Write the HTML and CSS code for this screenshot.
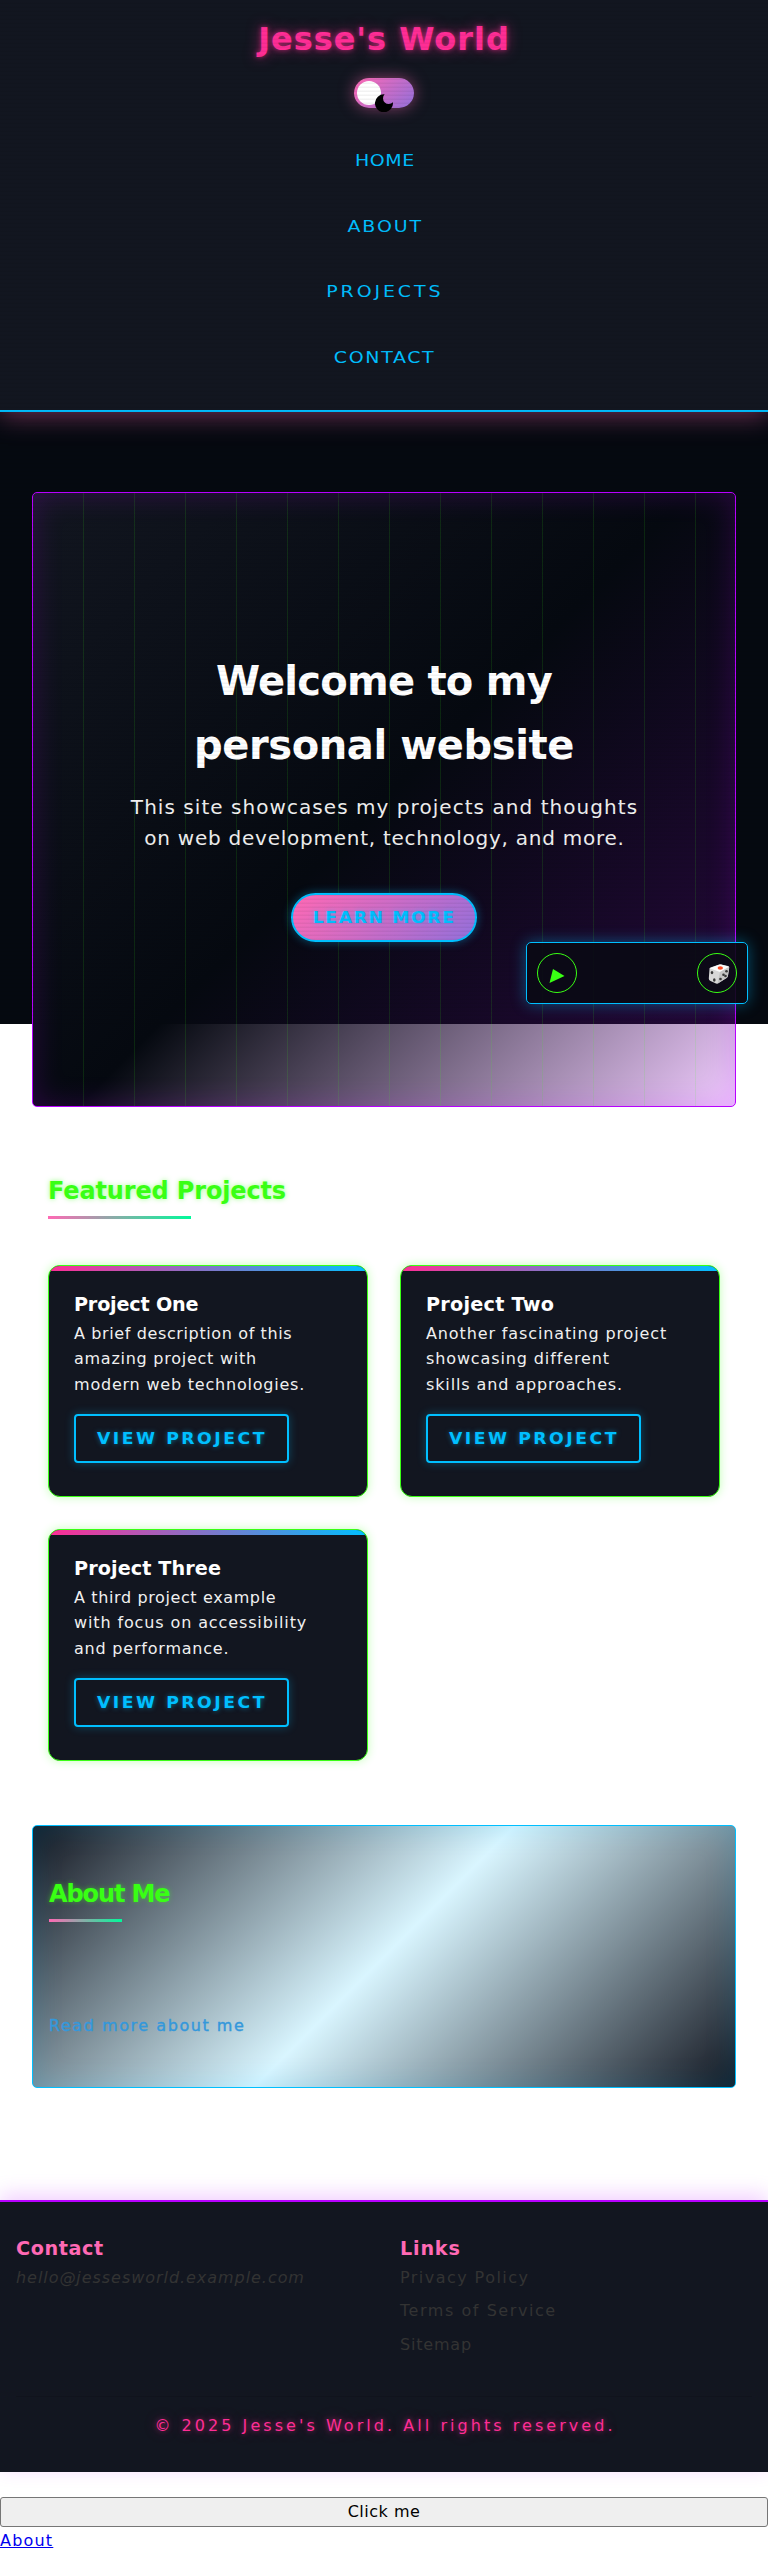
FILE: index.html
```html
<!DOCTYPE html>
<html lang="en">
<head>
<meta charset="utf-8">
<title>Jesse's World</title>
<link rel="stylesheet" href="styles.css">
</head>
<body>
<div class="backdrop"></div>
<div class="scanlines"></div>
<header class="header">
  <div class="logo">Jesse's World</div>
  <div class="toggle"><span class="knob"></span>
    <svg class="moon" viewBox="0 0 18 18"><path d="M9.6 0.3A9 9 0 1 0 17.9 8.2A5.6 5.6 0 1 1 9.6 0.3Z"/></svg>
  </div>
  <nav class="nav">
    <a class="home">HOME</a>
    <a class="about-nav">ABOUT</a>
    <a class="projects">PROJECTS</a>
    <a class="contact">CONTACT</a>
  </nav>
</header>
<main>
  <section class="hero">
    <h1><span class="h1-a">Welcome to my</span><span class="h1-b">personal website</span></h1>
    <p class="lead"><span class="lead-a">This site showcases my projects and thoughts</span><span class="lead-b">on web development, technology, and more.</span></p>
    <a class="learn"><span class="wide">LEARN MORE</span></a>
  </section>
  <section class="featured">
    <h2 class="title">Featured Projects</h2>
    <div class="cards">
      <article class="card">
        <h3 class="one">Project One</h3>
        <p><span class="ls6">A brief description of this</span><span class="ls7">amazing project with</span><span class="ls8">modern web technologies.</span></p>
        <a class="view"><span class="wide">VIEW PROJECT</span></a>
      </article>
      <article class="card">
        <h3 class="two">Project Two</h3>
        <p><span class="ls9">Another fascinating project</span><span class="ls9">showcasing different</span><span class="ls9">skills and approaches.</span></p>
        <a class="view"><span class="wide">VIEW PROJECT</span></a>
      </article>
      <article class="card">
        <h3 class="three">Project Three</h3>
        <p><span class="ls6">A third project example</span><span class="ls9">with focus on accessibility</span><span class="ls8">and performance.</span></p>
        <a class="view"><span class="wide">VIEW PROJECT</span></a>
      </article>
    </div>
  </section>
  <section class="about">
    <h2 class="title">About Me</h2>
    <a class="more">Read more about me</a>
  </section>
</main>
<footer class="footer">
  <div class="cols">
    <div><h3 class="fc">Contact</h3><address>hello@jessesworld.example.com</address></div>
    <div><h3 class="fl">Links</h3>
      <ul><li class="privacy">Privacy Policy</li><li class="terms">Terms of Service</li><li class="sitemap">Sitemap</li></ul>
    </div>
  </div>
  <p class="copy">© 2025 Jesse's World. All rights reserved.</p>
</footer>
<button class="click">Click me</button>
<a class="last" href="#">About</a>
<div class="player">
  <span class="round"><svg class="play" viewBox="0 0 16 14"><path d="M4 0L15.5 7L0.5 14Z"/></svg></span>
  <span class="round"><svg class="die" viewBox="0 0 22 20">
    <path d="M1.5 5Q1 4 2.5 3.5L10.500 .7Q12 .2 13 .5L20 2Q21.500 2.500 21.200 4L20 11.500Q19.800 13 18.500 14L10.500 19Q9.500 20 8 19.500L2 16.800Q.8 16 .8 14.500Z" fill="#d8d8d8"/>
    <path d="M1.700 4.200L11.500 .6Q12.300 .3 13 .5L21 2.700L12 8Z" fill="#fbfbfb"/>
    <path d="M12 8L21.200 3L20 11.500Q19.800 13 18.500 14L9.500 19.700Z" fill="#c4c4c4"/>
    <ellipse cx="12.300" cy="4" rx="2.700" ry="1.800" fill="#ff4b25"/>
    <g fill="#383838"><ellipse cx="4" cy="8.600" rx="1.300" ry="1.700"/><ellipse cx="6.300" cy="16" rx="1.300" ry="1.700"/><circle cx="18.500" cy="7.200" r="1.300"/><circle cx="15.500" cy="10.800" r="1.300"/><circle cx="12.500" cy="15" r="1.300"/><circle cx="17.500" cy="12" r="1.300"/></g>
  </svg></span>
</div>
</body>
</html>
```
FILE: styles.css
```css
* { box-sizing: border-box; margin: 0; padding: 0; }
body {
  position: relative;
  height: 2553px;
  background: #fff;
  color: #fff;
  font: 16px/25.6px "DejaVu Sans", sans-serif;
  white-space: nowrap;
  overflow: hidden;
}
.backdrop {
  position: absolute; top: 0; left: 0; right: 0; height: 1024px; z-index: -1;
  background: #050910;
}
.scanlines {
  position: absolute; top: 0; left: 0; right: 0; height: 1024px; z-index: 5;
  pointer-events: none;
  background: repeating-linear-gradient(0deg, rgba(0, 0, 0, .05) 0, rgba(0, 0, 0, .05) 1px, transparent 2px, transparent 4px);
}
.wide { display: inline-block; transform: scaleX(1.15); }

.header {
  height: 412px; padding-top: 15px;
  display: flex; flex-direction: column; align-items: center;
  background: #121620;
  border-bottom: 2px solid #00bfff;
  box-shadow: 0 5px 24px rgba(255, 105, 180, .38);
}
.logo {
  height: 48px;
  font-weight: bold; font-size: 32px; line-height: 48px; letter-spacing: .95px;
  color: #ff2d95;
  text-shadow: 0 0 5px rgba(255, 45, 149, .6), 0 0 14px rgba(255, 45, 149, .5);
}
.toggle {
  position: relative;
  width: 60px; height: 30px; margin-top: 15px; padding: 3px;
  border-radius: 15px;
  background: linear-gradient(135deg, #ff69b4, #9370db);
  box-shadow: 0 0 15px rgba(255, 105, 180, .5);
}
.knob { display: block; width: 24px; height: 24px; border-radius: 50%; background: #fff; }
.moon { position: absolute; left: 21px; top: 16px; width: 18px; height: 18px; }
.nav {
  margin-top: 21px; padding-left: 2px;
  display: grid; grid-auto-rows: 65.6px; justify-items: center;
}
.nav a { line-height: 65.6px; font-size: 15.2px; color: #00bfff; transform: scaleX(1.25); }
.home { letter-spacing: .4px; }
.about-nav { letter-spacing: 1.5px; }
.projects { letter-spacing: 2.3px; }
.contact { letter-spacing: 1.3px; }

.hero {
  height: 615px; margin: 80px 32px 0; padding-top: 156px;
  display: flex; flex-direction: column; align-items: center;
  border: 1px solid #b800ff; border-radius: 5px;
  background:
    repeating-linear-gradient(90deg, transparent 0, transparent 50px, rgba(57, 255, 20, .12) 50px, rgba(57, 255, 20, .12) 51px),
    linear-gradient(135deg, #121620 0%, #050910 50%, rgba(184, 0, 255, .2) 100%);
  box-shadow: inset 0 0 30px rgba(184, 0, 255, .2);
}
h1 { font-size: 40px; line-height: 64px; text-align: center; }
h1 span, .lead span, .card p span { display: block; }
.h1-a { letter-spacing: -.75px; }
.h1-b { letter-spacing: -.4px; }
.lead { margin-top: 14.500px; padding-left: 1px; font-size: 20px; line-height: 31px; text-align: center; color: #f0f0f0; }
.lead-a { letter-spacing: 1.05px; }
.lead-b { letter-spacing: .75px; }
.learn {
  width: 186px; height: 49px; margin-top: 39.500px;
  border: 2px solid #00bfff; border-radius: 25px;
  background: linear-gradient(135deg, #ff69b4, #9370db);
  box-shadow: 0 0 10px rgba(0, 191, 255, .4);
  color: #00bfff; font-weight: bold; font-size: 15px; line-height: 47px; text-align: center;
  letter-spacing: 1.4px;
  text-shadow: 0 0 5px rgba(0, 191, 255, .4);
}

.featured { padding: 65px 48px 0; }
.title {
  position: relative; width: max-content;
  font-size: 24px; line-height: 38px; letter-spacing: -.15px;
  color: #39ff14;
  text-shadow: 0 0 5px rgba(57, 255, 20, .5);
}
.title::after {
  content: ""; position: absolute; left: 0; top: 44px; width: 143px; height: 3px;
  background: linear-gradient(90deg, #ff69b4, #00fa9a);
}
.cards { margin-top: 55px; display: grid; grid-template-columns: 320px 320px; grid-auto-rows: 232px; gap: 32px; }
.card {
  position: relative; overflow: hidden;
  padding: 24px 25px;
  border: 1px solid #39ff14; border-radius: 12px;
  background: #121620;
  box-shadow: 0 0 10px rgba(57, 255, 20, .3);
}
.card::before {
  content: ""; position: absolute; left: 0; right: 0; top: 0; height: 5px;
  background: linear-gradient(90deg, #ff2d95, #00bfff);
}
h3 { font-size: 19.200px; line-height: 30.700px; }
.one { letter-spacing: -.2px; }
.two { letter-spacing: .25px; }
.three { letter-spacing: .1px; }
.card p { color: #f0f0f0; }
.ls6 { letter-spacing: .62px; }
.ls7 { letter-spacing: .74px; }
.ls8 { letter-spacing: .79px; }
.ls9 { letter-spacing: .88px; }
.view {
  display: block; width: 215px; height: 49px; margin-top: 16.500px;
  border: 2px solid #00bfff; border-radius: 4px;
  box-shadow: 0 0 10px rgba(0, 191, 255, .3);
  color: #00bfff; font-weight: bold; font-size: 15px; line-height: 47px; text-align: center;
  letter-spacing: 2.200px;
  text-shadow: 0 0 5px rgba(0, 191, 255, .5);
}

.about {
  height: 263px; margin: 64px 32px 0; padding: 48.700px 16px 0;
  border: 1px solid #00bfff; border-radius: 5px;
  background: linear-gradient(135deg, #121620 0%, rgba(0, 191, 255, .15) 50%, #121620 100%);
  box-shadow: inset 0 0 30px rgba(0, 191, 255, .17);
}
.about .title { letter-spacing: -1.100px; }
.about .title::after { width: 73px; }
.more { display: block; margin-top: 100px; letter-spacing: 1.550px; color: #3498db; -webkit-text-stroke: .4px #3498db; }

.footer {
  height: 272px; margin-top: 112px; padding: 32px 16px 0;
  background: #121620;
  border-top: 2px solid #b800ff;
  box-shadow: 0 -5px 20px rgba(184, 0, 255, .2);
  color: #333;
}
.cols { display: grid; grid-template-columns: 352px 352px; column-gap: 32px; }
.footer h3 { color: #ff69b4; }
.fc { letter-spacing: .6px; }
.fl { letter-spacing: .8px; }
address { letter-spacing: .95px; }
ul { list-style: none; }
li { margin-bottom: 8px; }
.privacy { letter-spacing: 1.450px; }
.terms { letter-spacing: 1.550px; }
.sitemap { letter-spacing: .8px; }
.copy {
  margin-top: 31px; padding-top: 16px; padding-left: 2px;
  border-top: 1px solid #10131c;
  text-align: center; letter-spacing: 3.050px; color: #ff2d95;
  text-shadow: 0 0 5px rgba(255, 45, 149, .5), 0 0 14px rgba(255, 45, 149, .4);
}
.click {
  display: block; width: 100%; height: 30px; margin: 25px 0 1px;
  border: 1px solid #767676; border-radius: 3px;
  background: #efefef; color: #000;
  font: inherit; letter-spacing: .5px;
}
.last { display: block; width: max-content; height: 25px; line-height: 25px; letter-spacing: 1.200px; color: #0000ee; }

.player {
  position: absolute; left: 526px; top: 942px; z-index: 6;
  width: 222px; height: 62px; padding: 10px;
  display: flex; justify-content: space-between;
  border: 1px solid #00bfff; border-radius: 5px;
  background: rgba(10, 10, 20, .9);
  box-shadow: 0 0 15px rgba(0, 191, 255, .4);
}
.round { width: 40px; height: 40px; border: 1px solid #39ff14; border-radius: 50%; display: flex; align-items: center; justify-content: center; }
.play { width: 16px; height: 14px; margin-top: 5px; fill: #39ff14; }
.die { width: 22px; height: 20px; margin: 2px 0 0 3px; }
```
